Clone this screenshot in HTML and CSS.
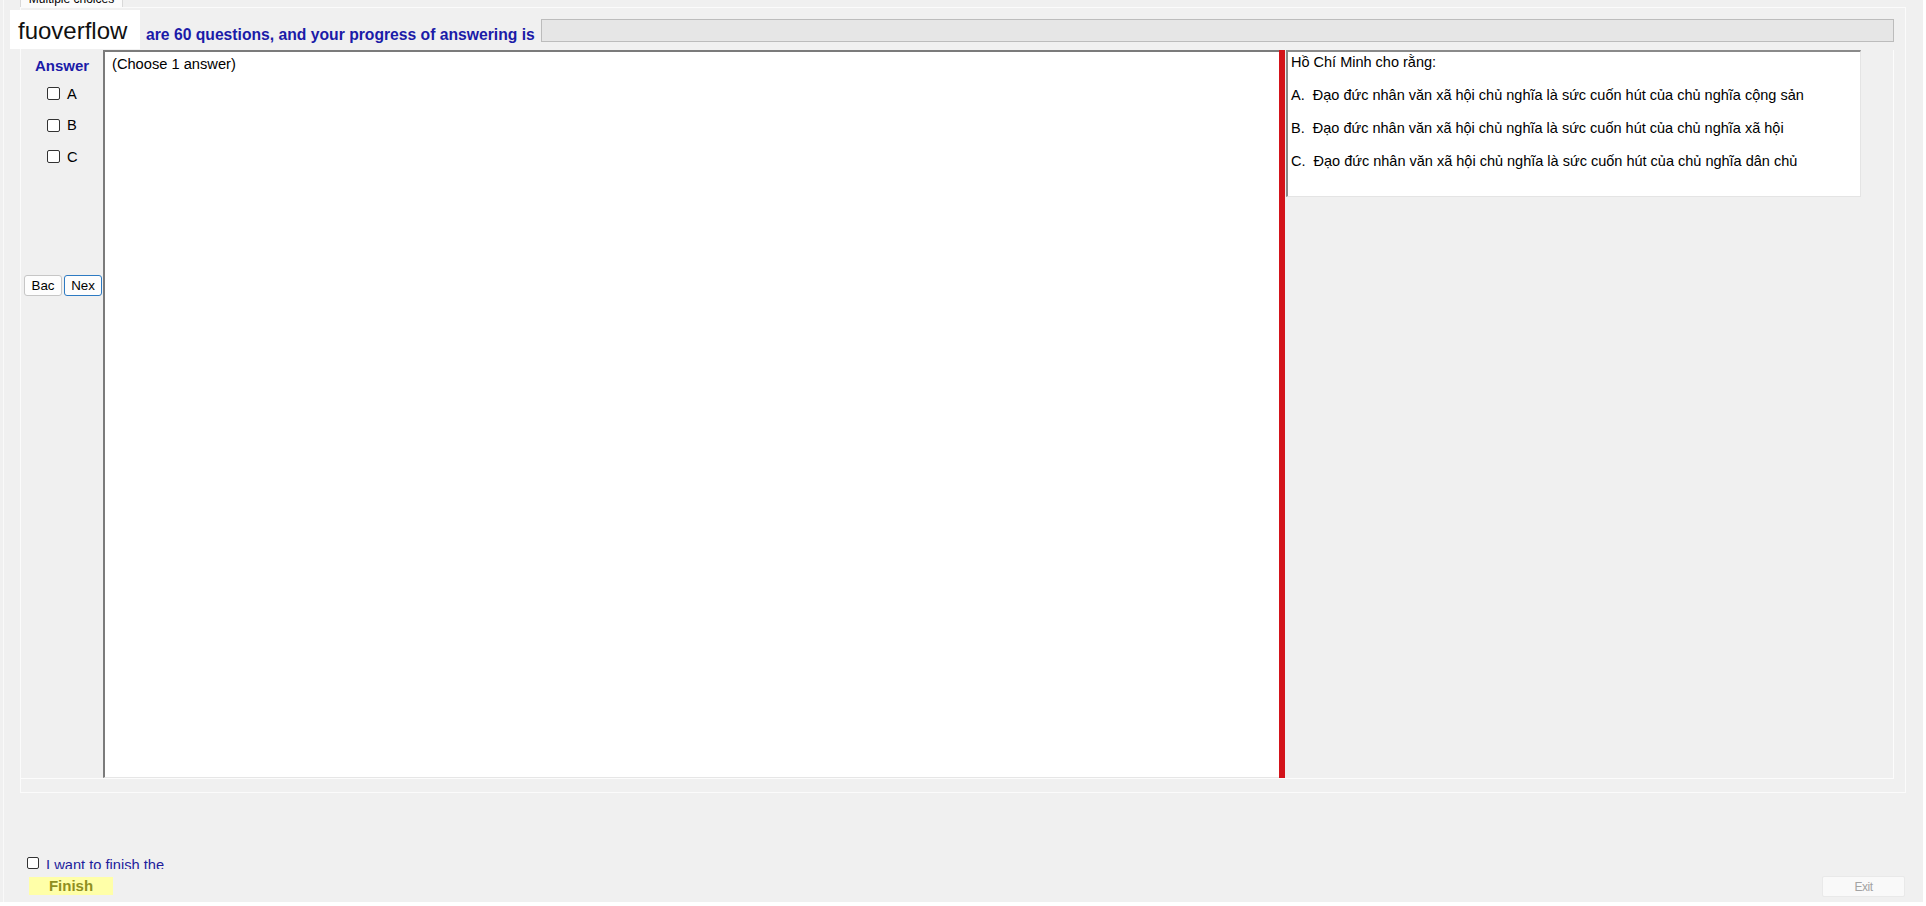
FILE: index.html
```html
<!DOCTYPE html>
<html lang="vi">
<head>
  <meta charset="UTF-8" />
  <meta name="viewport" content="width=device-width, initial-scale=1.0" />
  <title>Multiple choices</title>
  <link rel="stylesheet" href="styles.css">
</head>
<body>
  <div class="window">
    <div class="tabs">
      <div class="tab">Multiple choices</div>
    </div>

    <div class="page">
      <div class="head">
        <span class="head-label">are 60 questions, and your progress of answering is</span>
        <div class="progress"></div>
      </div>

      <div class="content">
        <div class="answers">
          <div class="answer-title">Answer</div>
          <div class="checks">
            <label class="check-row"><input type="checkbox" class="cb"> A</label>
            <label class="check-row"><input type="checkbox" class="cb"> B</label>
            <label class="check-row"><input type="checkbox" class="cb"> C</label>
          </div>
          <div class="nav">
            <button class="btn">Bac</button>
            <button class="btn focus">Nex</button>
          </div>
        </div>

        <div class="textbox">(Choose 1 answer)</div>
        <div class="splitter"></div>

        <div class="right">
          <div class="question">
            <p>Hồ Chí Minh cho rằng:</p>
            <p>A.&nbsp; Đạo đức nhân văn xã hội chủ nghĩa là sức cuốn hút của chủ nghĩa cộng sản</p>
            <p>B.&nbsp; Đạo đức nhân văn xã hội chủ nghĩa là sức cuốn hút của chủ nghĩa xã hội</p>
            <p>C.&nbsp; Đạo đức nhân văn xã hội chủ nghĩa là sức cuốn hút của chủ nghĩa dân chủ</p>
          </div>
        </div>
      </div>
    </div>

    <div class="footer">
      <div class="finish-group">
        <label class="finish-check">
          <input type="checkbox" class="cb small">
          <span class="finish-text">I want to finish the</span>
        </label>
        <button class="finish-btn">Finish</button>
      </div>
      <button class="exit" disabled>Exit</button>
    </div>

    <div class="watermark">fuoverflow</div>
  </div>
</body>
</html>
```

FILE: styles.css
```css
* {
  box-sizing: border-box;
}

body {
  margin: 0;
  background-color: #fff;
  font-family: "Liberation Sans", Arial, sans-serif;
  font-size: 14.67px;
  color: #000;
}

.window {
  position: relative;
  width: 1923px;
  height: 902px;
  background: linear-gradient(to right, #f0f0f0 3px, #f9f9f9 3px, #f9f9f9 4px, #f0f0f0 4px);
  display: flex;
  flex-direction: column;
  overflow: hidden;
}

/* tab strip, mostly scrolled out of view */
.tabs {
  height: 7px;
  padding-left: 20px;
}

.tab {
  width: 103px;
  height: 22px;
  margin-top: -15px;
  padding-top: 6px;
  background-color: #fbfbfb;
  border: 1px solid #d9d9d9;
  border-bottom: none;
  font-size: 12px;
  line-height: 14px;
  text-align: center;
}

.page {
  margin-left: 20px;
  width: 1886px;
  height: 786px;
  border: 1px solid #fbfbfb;
  display: flex;
  flex-direction: column;
}

.head {
  display: flex;
  align-items: flex-start;
  height: 34px;
  padding: 11px 11px 0 125px;
}

.head-label {
  font-weight: bold;
  font-size: 15.7px;
  line-height: 18px;
  padding-top: 7px;
  color: #1b1ba8;
  white-space: nowrap;
}

.progress {
  flex: none;
  width: 1353px;
  height: 23px;
  margin-left: auto;
  background-color: #e6e6e6;
  border: 1px solid #bcbcbc;
}

.content {
  display: flex;
  height: 729px;
  margin-top: 8px;
  margin-right: 11px;
  border-right: 1px solid #fcfcfc;
  border-bottom: 1px solid #fcfcfc;
}

.answers {
  flex: none;
  width: 82px;
  display: flex;
  flex-direction: column;
  align-items: center;
  padding-top: 7px;
}

.answer-title {
  font-weight: bold;
  font-size: 15px;
  line-height: 18px;
  color: #1b1ba8;
}

.checks {
  align-self: flex-start;
  margin: 3px 0 0 26px;
}

.check-row {
  height: 31.5px;
  display: flex;
  align-items: center;
  gap: 7px;
}

.cb {
  appearance: none;
  width: 13px;
  height: 13px;
  margin: 0;
  background-color: #fff;
  border: 1px solid #333;
  border-radius: 2px;
}

.cb.small {
  width: 12px;
  height: 12px;
}

.nav {
  align-self: flex-start;
  display: flex;
  gap: 2px;
  margin: 102.5px 0 0 3px;
}

.btn {
  width: 38px;
  height: 21px;
  padding: 0;
  background-color: #fdfdfd;
  border: 1px solid #c6c6c6;
  border-radius: 3px;
  font-family: inherit;
  font-size: 13.33px;
  color: #000;
}

.btn.focus {
  border-color: #2d7ac2;
}

.textbox {
  flex: none;
  width: 1176px;
  background-color: #fff;
  border-top: 2px solid #7b7b7b;
  border-left: 2px solid #7b7b7b;
  border-bottom: 1px solid #e6e6e6;
  padding: 4px 7px;
  line-height: 17px;
}

.splitter {
  flex: none;
  width: 6px;
  background-color: #d3131a;
}

.right {
  flex: 1;
  padding-left: 1px;
}

.question {
  width: 575px;
  height: 147px;
  background-color: #fff;
  border-top: 2px solid #8a8a8a;
  border-left: 2px solid #8a8a8a;
  border-right: 1px solid #e4e4e4;
  border-bottom: 1px solid #e4e4e4;
  padding: 2px 3px;
  font-size: 14.5px;
}

.question p {
  margin: 0 0 16px;
  line-height: 17px;
  white-space: nowrap;
}

.footer {
  flex: 1;
  display: flex;
  justify-content: space-between;
  align-items: flex-end;
  padding: 0 18px 5px 27px;
}

.finish-group {
  display: flex;
  flex-direction: column;
  margin-bottom: 2px;
}

.finish-check {
  display: flex;
  align-items: flex-start;
  gap: 7px;
  height: 12px;
}

.finish-text {
  height: 12px;
  overflow: hidden;
  line-height: 17px;
  white-space: nowrap;
  color: #1d1d9c;
}

.finish-btn {
  width: 84px;
  height: 18px;
  margin: 8px 0 0 2px;
  padding: 0;
  background-color: #ffffa8;
  border: none;
  font-family: inherit;
  font-weight: bold;
  font-size: 15px;
  line-height: 18px;
  color: #8f8f1f;
}

.exit {
  width: 83px;
  height: 21px;
  padding: 0;
  background-color: #f9f9f9;
  border: 1px solid #e9e9e9;
  border-radius: 2px;
  font-family: inherit;
  font-size: 12px;
  letter-spacing: -0.5px;
  color: #a3a3a3;
}

/* watermark box lying over the header label */
.watermark {
  position: absolute;
  left: 10px;
  top: 10px;
  width: 130px;
  height: 39px;
  padding: 7px 0 0 8px;
  background-color: #fff;
  font-size: 24px;
  line-height: 28px;
  color: #111;
}
```
